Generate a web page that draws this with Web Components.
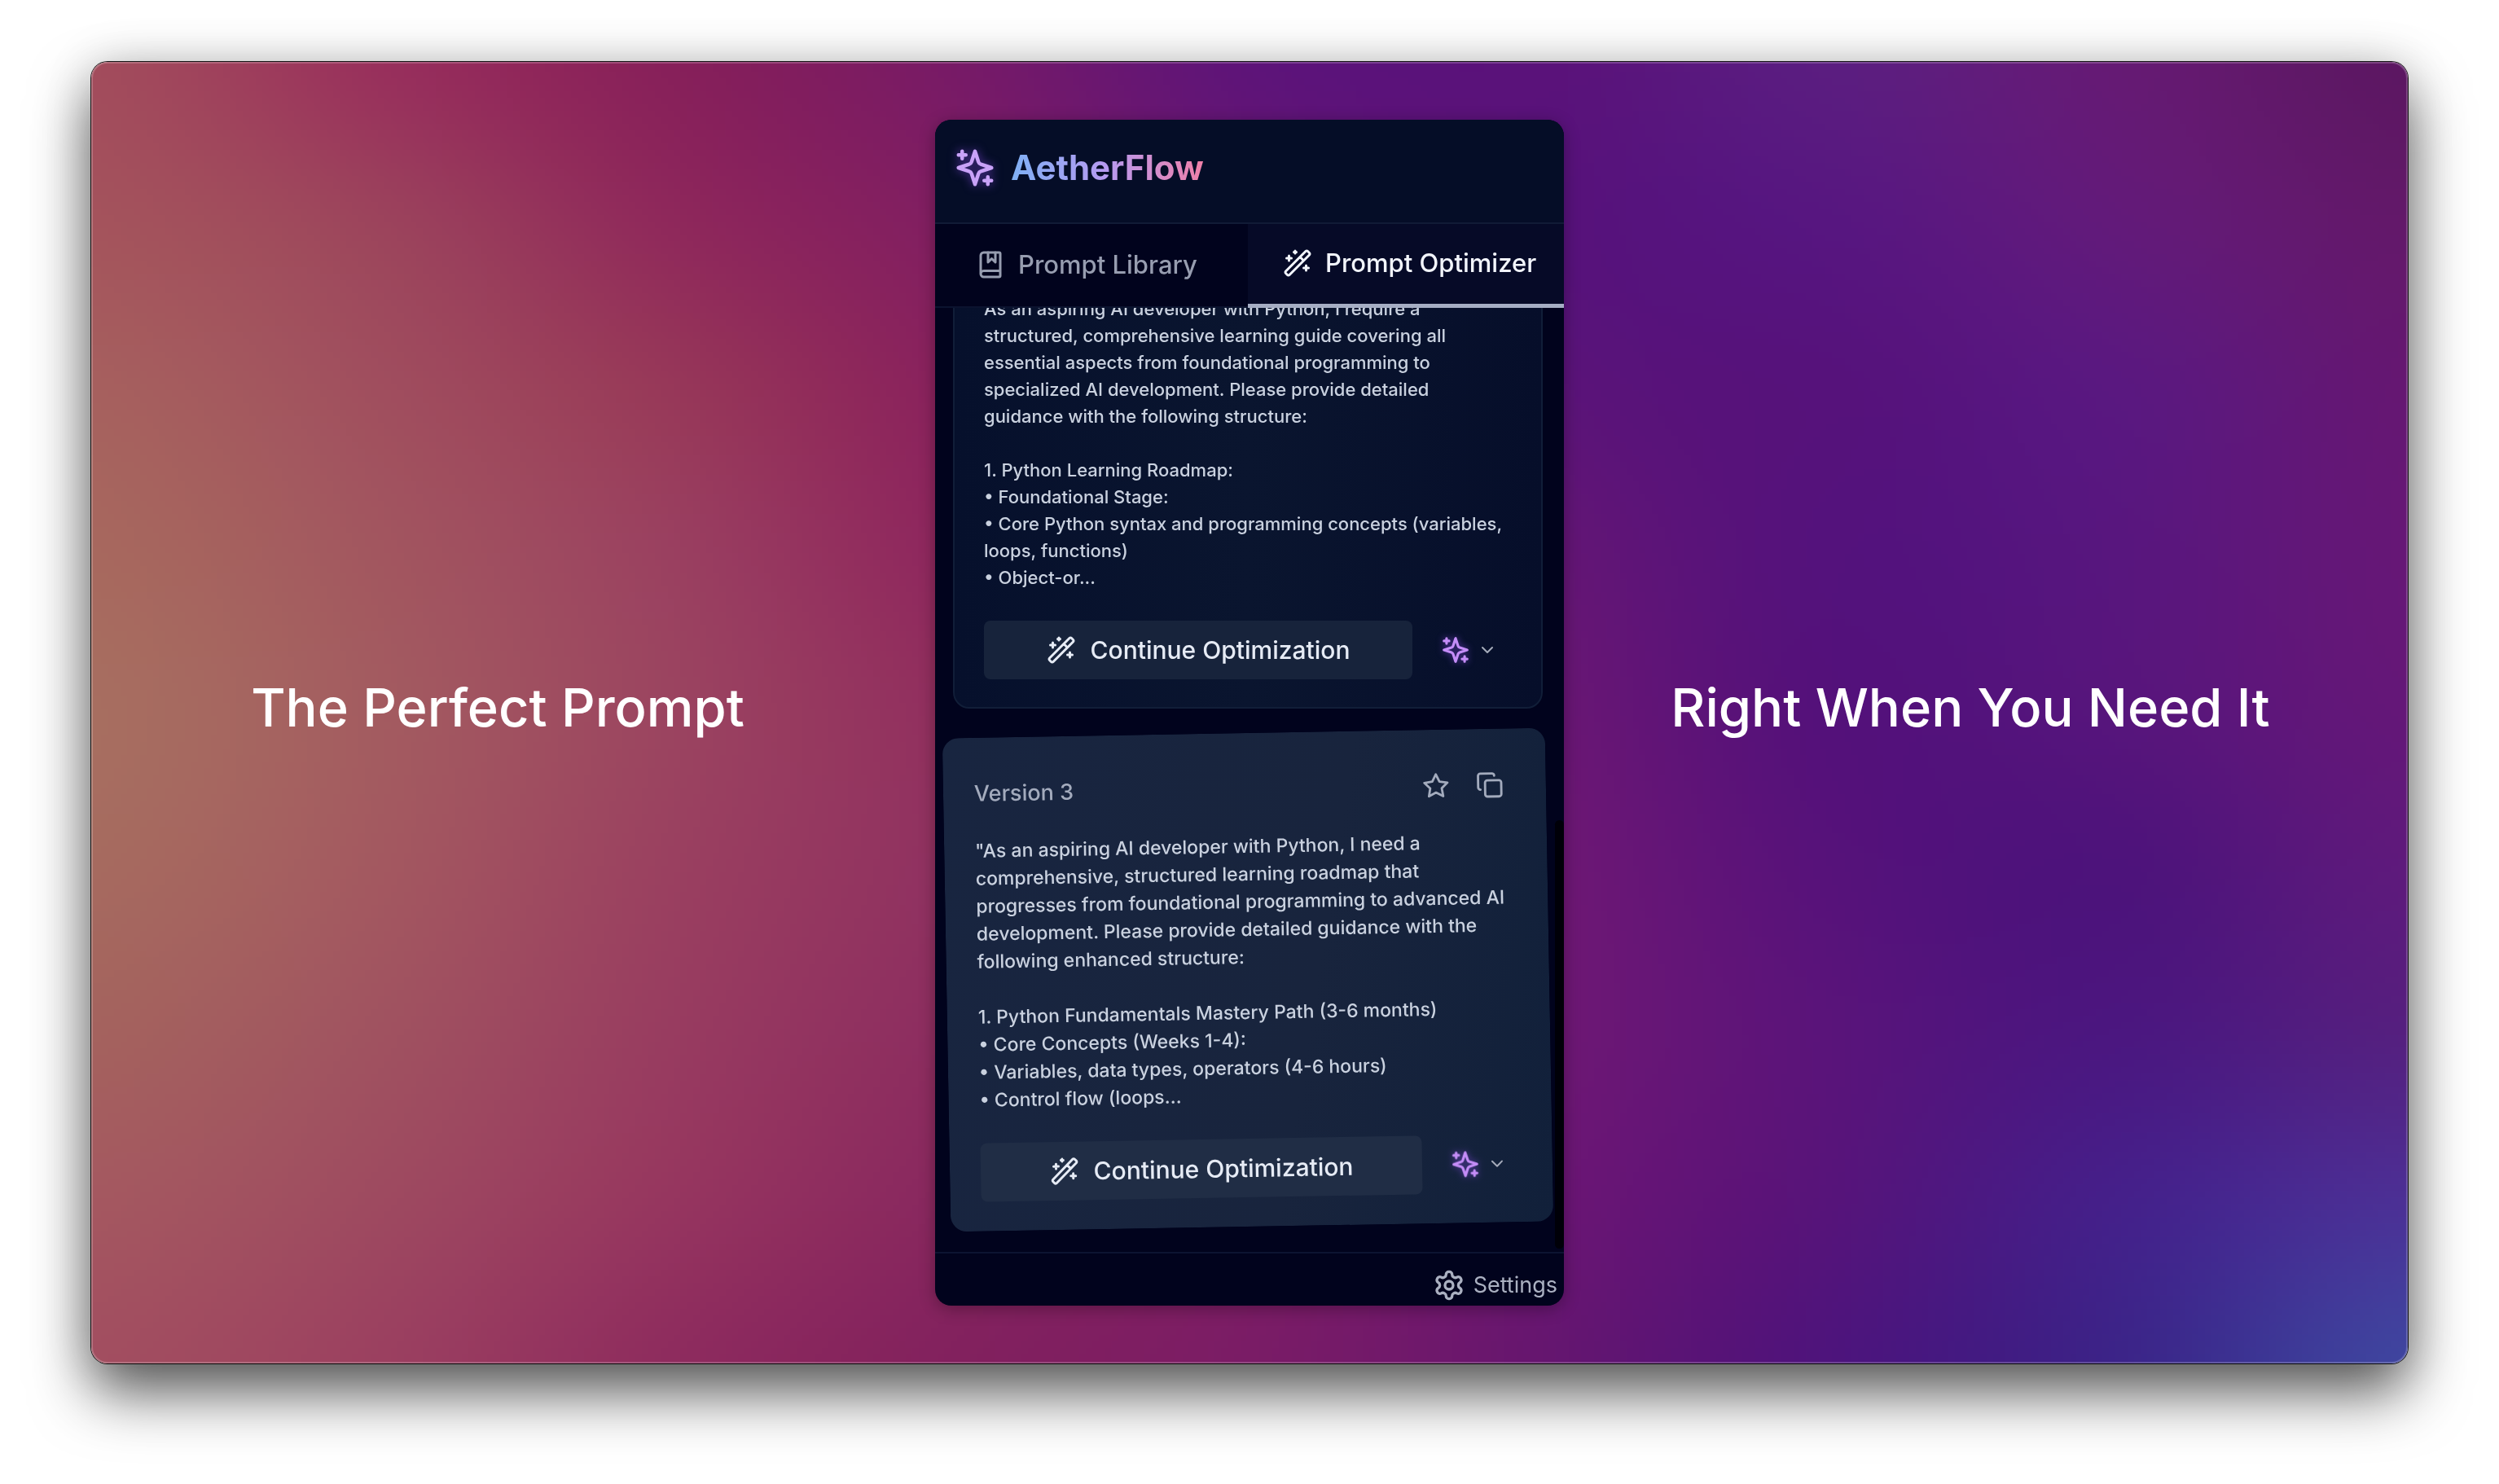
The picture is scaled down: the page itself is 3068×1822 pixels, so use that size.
<!DOCTYPE html>
<html lang="en">
<head>
<meta charset="utf-8">
<title>AetherFlow</title>
<style>
  html, body { margin: 0; background: #fff; }
  body { font-family: Inter, "Liberation Sans", sans-serif; }
</style>
</head>
<body>
<promo-stage>
  <promo-caption slot="left">The Perfect Prompt</promo-caption>
  <side-panel>
    <version-card>As an aspiring AI developer with Python, I require a
structured, comprehensive learning guide covering all
essential aspects from foundational programming to
specialized AI development. Please provide detailed
guidance with the following structure:

1. Python Learning Roadmap:
• Foundational Stage:
• Core Python syntax and programming concepts (variables,
loops, functions)
• Object-or...</version-card>
    <version-card lifted label="Version 3">"As an aspiring AI developer with Python, I need a
comprehensive, structured learning roadmap that
progresses from foundational programming to advanced AI
development. Please provide detailed guidance with the
following enhanced structure:

1. Python Fundamentals Mastery Path (3-6 months)
• Core Concepts (Weeks 1-4):
• Variables, data types, operators (4-6 hours)
• Control flow (loops...</version-card>
  </side-panel>
  <promo-caption slot="right">Right When You Need It</promo-caption>
</promo-stage>

<script>
const ICONS = {
  sparkles: '<path d="m12 3-1.912 5.813a2 2 0 0 1-1.275 1.275L3 12l5.813 1.912a2 2 0 0 1 1.275 1.275L12 21l1.912-5.813a2 2 0 0 1 1.275-1.275L21 12l-5.813-1.912a2 2 0 0 1-1.275-1.275L12 3Z"/><path d="M5 3v4M19 17v4M3 5h4M17 19h4"/>',
  wand: '<path d="m21.64 3.64-1.28-1.28a1.21 1.21 0 0 0-1.72 0L2.36 18.64a1.21 1.21 0 0 0 0 1.72l1.28 1.28a1.2 1.2 0 0 0 1.72 0L21.64 5.36a1.2 1.2 0 0 0 0-1.72M14 7l3 3M5 6v4M19 14v4M10 2v2M7 8H3M21 16h-4M11 3H9"/>',
  book: '<path d="M10 2v8l3-3 3 3V2"/><path d="M4 19.5v-15A2.5 2.5 0 0 1 6.5 2H19a1 1 0 0 1 1 1v18a1 1 0 0 1-1 1H6.5a1 1 0 0 1 0-5H20"/>',
  star: '<path d="M12 2l3.09 6.26L22 9.27l-5 4.87 1.18 6.88L12 17.77l-6.18 3.25L7 14.14 2 9.27l6.91-1.01z"/>',
  copy: '<rect x="8" y="8" width="14" height="14" rx="2"/><path d="M4 16c-1.1 0-2-.9-2-2V4c0-1.100.9-2 2-2h10c1.100 0 2 .9 2 2"/>',
  chevron: '<path d="m6 9 6 6 6-6"/>',
  settings: '<path d="M12.22 2h-.44a2 2 0 0 0-2 2v.18a2 2 0 0 1-1 1.730l-.43.25a2 2 0 0 1-2 0l-.15-.08a2 2 0 0 0-2.730.730l-.22.38a2 2 0 0 0 .730 2.730l.15.1a2 2 0 0 1 1 1.720v.51a2 2 0 0 1-1 1.740l-.15.09a2 2 0 0 0-.730 2.730l.22.38a2 2 0 0 0 2.730.730l.15-.08a2 2 0 0 1 2 0l.43.25a2 2 0 0 1 1 1.730V20a2 2 0 0 0 2 2h.44a2 2 0 0 0 2-2v-.18a2 2 0 0 1 1-1.730l.43-.25a2 2 0 0 1 2 0l.15.08a2 2 0 0 0 2.730-.730l.22-.39a2 2 0 0 0-.730-2.730l-.15-.08a2 2 0 0 1-1-1.740v-.5a2 2 0 0 1 1-1.740l.15-.09a2 2 0 0 0 .730-2.730l-.22-.38a2 2 0 0 0-2.730-.730l-.15.08a2 2 0 0 1-2 0l-.43-.25a2 2 0 0 1-1-1.730V4a2 2 0 0 0-2-2z"/><circle cx="12" cy="12" r="3"/>'
};

class LineIcon extends HTMLElement {
  constructor() {
    super();
    this.attachShadow({ mode: 'open' });
  }
  connectedCallback() {
    this.shadowRoot.innerHTML = `
      <style>
        :host { display: block; flex: none; width: var(--icon, 40px); height: var(--icon, 40px); }
        svg { display: block; width: 100%; height: 100%; overflow: visible; }
      </style>
      <svg viewBox="0 0 24 24" fill="none" stroke="currentColor" stroke-width="2" stroke-linecap="round" stroke-linejoin="round" aria-hidden="true">${ICONS[this.getAttribute('name')]}</svg>`;
  }
}
customElements.define('line-icon', LineIcon);

/* Colour field: a coarse grid of colours, smoothly interpolated on a canvas. */
class ColorMesh extends HTMLElement {
  constructor() {
    super();
    this.attachShadow({ mode: 'open' }).innerHTML = `
      <style>
        :host { display: block; }
        canvas { display: block; width: 100%; height: 100%; }
      </style>
      <canvas width="360" height="200"></canvas>`;
  }
  connectedCallback() {
    const rows = [
      'a24c5c 98305c 87205a 771a67 5e1479 5a127a 5b1d80 651a74 5c1762',
      'a4545c 9c445c 8f295b 801e62 6a1670 58127a 571680 621a7a 63186a',
      'a6605e a04e5e 973859 88215e 701a6c 5c1478 56127b 5a1880 651772',
      'a7685e a2565f 9a4060 8d265e 7a1c66 651674 54127c 58167e 661776',
      'a76e60 a35b60 9b4460 902e5f 7e1e66 6b1773 54117a 57157c 641778',
      'a66a5f a35860 9a4060 8f3061 801f66 6f1873 57127a 4d137b 5e1a7c',
      'a4625e a05260 983c60 8c2c60 801f66 6f1873 5a147a 4b1780 552080',
      'a45860 9e4a60 96365f 88275f 7e1e64 6c1673 57147a 45208a 4c3095',
      'a24e60 9b4060 8e2c5e 82215e 7a1c66 66166f 4e147c 3c2488 3f459f'
    ].map(r => r.split(' ').map(h => [0, 2, 4].map(i => parseInt(h.substr(i, 2), 16))));
    const spline = (a, b, c, d, t) =>
      b + 0.5 * t * (c - a + t * (2 * a - 5 * b + 4 * c - d + t * (3 * (b - c) + d - a)));
    const pick = (list, i) => list[Math.max(0, Math.min(list.length - 1, i))];
    const canvas = this.shadowRoot.querySelector('canvas');
    const ctx = canvas.getContext('2d');
    const { width: w, height: h } = canvas;
    const img = ctx.createImageData(w, h);
    for (let y = 0; y < h; y++) {
      const v = y / (h - 1) * (rows.length - 1), j = Math.min(rows.length - 2, Math.floor(v));
      for (let x = 0; x < w; x++) {
        const u = x / (w - 1) * (rows[0].length - 1), i = Math.min(rows[0].length - 2, Math.floor(u));
        for (let k = 0; k < 3; k++) {
          const line = n => {
            const r = pick(rows, n);
            return spline(pick(r, i - 1)[k], r[i][k], r[i + 1][k], pick(r, i + 2)[k], u - i);
          };
          img.data[(y * w + x) * 4 + k] = spline(line(j - 1), line(j), line(j + 1), line(j + 2), v - j);
        }
        img.data[(y * w + x) * 4 + 3] = 255;
      }
    }
    ctx.putImageData(img, 0, 0);
  }
}
customElements.define('color-mesh', ColorMesh);

class PromoStage extends HTMLElement {
  constructor() {
    super();
    this.attachShadow({ mode: 'open' }).innerHTML = `
      <style>
        :host { display: flex; box-sizing: border-box; min-height: 100vh; padding: 76px 112px 148px; }
        main {
          position: relative; flex: 1; display: grid; grid-template-columns: 1fr 772px 1fr;
          padding: 71px 0; border-radius: 20px; isolation: isolate;
          box-shadow: 0 0 0 1px rgba(0,0,0,.9), 0 36px 72px rgba(0,0,0,.64), 0 0 60px rgba(0,0,0,.14);
        }
        color-mesh { position: absolute; inset: 0; z-index: -1; border-radius: 20px; overflow: hidden; }
        main::after {
          content: ""; position: absolute; inset: 0; border-radius: 20px; pointer-events: none;
          border: 2px solid rgba(255,255,255,.2);
        }
      </style>
      <main>
        <color-mesh></color-mesh>
        <slot name="left"></slot>
        <slot></slot>
        <slot name="right"></slot>
      </main>`;
  }
}
customElements.define('promo-stage', PromoStage);

class PromoCaption extends HTMLElement {
  constructor() {
    super();
    this.attachShadow({ mode: 'open' }).innerHTML = `
      <style>
        :host { display: flex; align-items: center; justify-content: center; padding: 0 38px 12px 0; color: #fff; }
        h2 { margin: 0; font-size: 65px; font-weight: 500; line-height: 88px; white-space: nowrap; }
      </style>
      <h2><slot></slot></h2>`;
  }
}
customElements.define('promo-caption', PromoCaption);

class SidePanel extends HTMLElement {
  constructor() {
    super();
    this.attachShadow({ mode: 'open' }).innerHTML = `
      <style>
        :host {
          display: flex; flex-direction: column; overflow: hidden; border-radius: 20px;
          background: #01031d; color: #c3c9d8; box-shadow: 0 4px 20px rgba(0,0,0,.3);
        }
        button { font: inherit; color: inherit; border: 0; background: none; cursor: pointer; }
        header {
          display: flex; align-items: center; gap: 17px; box-sizing: border-box; height: 128px;
          padding: 0 20px 8px 22px; background: #050d27; border-bottom: 2px solid #111b36;
        }
        header line-icon { --icon: 54px; color: #c9a2f8; filter: drop-shadow(0 0 6px rgba(147,80,250,.6)); }
        h1 {
          margin: 0; font-size: 42px; font-weight: 700; line-height: 56px;
          background: linear-gradient(90deg, #7fb0f5, #b79af0 50%, #f080a8);
          -webkit-background-clip: text; background-clip: text; color: transparent;
        }
        nav { display: grid; grid-template-columns: 384fr 388fr; height: 103px; flex: none; }
        nav button {
          display: flex; align-items: center; gap: 16px; box-sizing: border-box; padding: 0 0 2px;
          font-size: 31px; font-weight: 500; line-height: 40px; white-space: nowrap;
          border-bottom: 2px solid #0b132f; color: #979db0;
        }
        nav line-icon { --icon: 36px; }
        .library { padding-left: 50px; }
        .optimizer { padding-left: 43px; color: #f2f5fc; background: #060a27; border-bottom: 5px solid #a5adc3; }
        section {
          position: relative; flex: 1; contain: size; display: flex; flex-direction: column;
          justify-content: flex-end; gap: 30px; padding: 0 26px 31px 22px; overflow: hidden;
        }
        .thumb { position: absolute; right: 0; bottom: 4px; width: 11px; height: 526px; border-radius: 6px; background: #000008; }
        footer { flex: none; height: 64px; display: flex; justify-content: flex-end; border-top: 2px solid #0c1431; }
        footer button { display: flex; align-items: center; gap: 10px; height: 78px; padding: 0 8px 0 0; font-size: 27px; line-height: 36px; color: #aab0c1; }
        footer line-icon { --icon: 40px; }
      </style>
      <header><line-icon name="sparkles"></line-icon><h1>AetherFlow</h1></header>
      <nav>
        <button class="library" type="button"><line-icon name="book"></line-icon>Prompt Library</button>
        <button class="optimizer" type="button"><line-icon name="wand"></line-icon>Prompt Optimizer</button>
      </nav>
      <section><slot></slot><div class="thumb"></div></section>
      <footer><button type="button"><line-icon name="settings"></line-icon>Settings</button></footer>`;
  }
}
customElements.define('side-panel', SidePanel);

class VersionCard extends HTMLElement {
  constructor() {
    super();
    this.attachShadow({ mode: 'open' });
  }
  connectedCallback() {
    const label = this.getAttribute('label');
    this.shadowRoot.innerHTML = `
      <style>
        :host {
          --line: 33px; --size: 22px; --action: #17233b;
          display: flex; flex-direction: column; flex: none; padding: 36px 36px 34px; border: 2px solid #111e38;
          border-radius: 20px; background: linear-gradient(90deg, #06102c, #0a152f 50%, #060e2a);
        }
        :host([lifted]) {
          --line: 34px; --size: 23px; --action: #202d45;
          margin: 0 -8px; padding: 38px 36px 34px; border-color: transparent;
          background: linear-gradient(100deg, #182540, #18243d 60%, #11203a) border-box;
          transform: rotate(-1deg);
        }
        button { display: flex; align-items: center; border: 0; padding: 0; background: none; font: inherit; color: inherit; cursor: pointer; }
        .top { display: flex; align-items: center; gap: 32px; height: 58px; margin-bottom: 24px; color: #a3abbd; }
        .top h3 { flex: 1; margin: 0; font-size: 27px; font-weight: 500; line-height: 36px; }
        .top button:last-child { margin-right: 14px; }
        .top line-icon { --icon: 34px; }
        p { margin: 0 0 36px; font-size: var(--size); font-weight: 500; line-height: var(--line); white-space: pre; color: #c9d1df; }
        .actions { display: flex; align-items: center; gap: 34px; }
        .go {
          flex: 1; justify-content: center; gap: 18px; height: 72px; border-radius: 8px; background: var(--action);
          font-size: 30px; font-weight: 500; line-height: 40px; color: #e6ebf5;
        }
        .go line-icon { --icon: 36px; }
        .model { gap: 8px; margin-right: 18px; color: #a5abba; }
        .model line-icon { --icon: 24px; }
        .model line-icon:first-child { --icon: 38px; color: #c58df8; filter: drop-shadow(0 0 4px rgba(147,80,250,.6)); }
      </style>
      ${label ? `<div class="top"><h3>${label}</h3>
        <button type="button" aria-label="Favorite"><line-icon name="star"></line-icon></button>
        <button type="button" aria-label="Copy"><line-icon name="copy"></line-icon></button></div>` : ''}
      <p><slot></slot></p>
      <div class="actions">
        <button class="go" type="button"><line-icon name="wand"></line-icon>Continue Optimization</button>
        <button class="model" type="button" aria-label="Choose model"><line-icon name="sparkles"></line-icon><line-icon name="chevron"></line-icon></button>
      </div>`;
  }
}
customElements.define('version-card', VersionCard);
</script>
</body>
</html>
